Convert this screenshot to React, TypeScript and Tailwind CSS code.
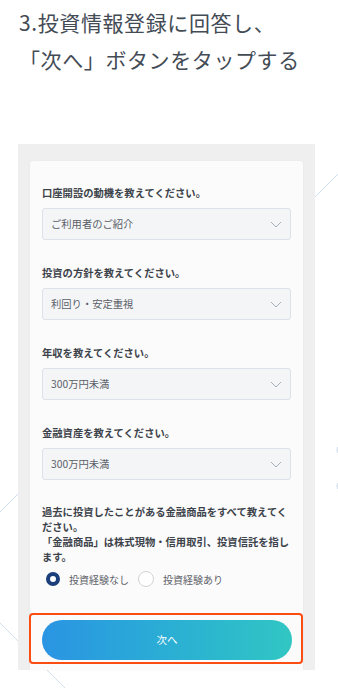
const Chevron = () => (
  <svg width="12" height="7" viewBox="0 0 12 7" fill="none" className="shrink-0">
    <path d="M1 1l5 5 5-5" stroke="#a7afba" strokeWidth="1" />
  </svg>
);

const Field = ({ label, value, first }: { label: string; value: string; first?: boolean }) => (
  <div className={first ? "" : "mt-[26px]"}>
    <p className="text-[10.3px] font-bold leading-[14px] text-[#3d434b]">{label}</p>
    <div className="mt-2 flex h-8 items-center justify-between rounded-[3px] border border-[#dce2ea] bg-[#f4f5f7] pl-2 pr-2 text-[10.3px] text-[#5b6068]">
      <span>{value}</span>
      <Chevron />
    </div>
  </div>
);

export default function App() {
  return (
    <div className="relative h-[688px] w-[338px] overflow-hidden bg-white font-['Noto_Sans_CJK_JP',sans-serif]">
      {/* background decoration */}
      <svg className="absolute inset-0" width="338" height="688" fill="none">
        <line x1="0" y1="512" x2="338" y2="174" stroke="#cfdff1" strokeWidth="1" />
        <line x1="0" y1="623" x2="70" y2="693" stroke="#cfdff1" strokeWidth="1" />
        <circle cx="342" cy="450" r="5" stroke="#c9d6e6" strokeWidth="1" />
        <circle cx="342" cy="486" r="5" stroke="#c9d6e6" strokeWidth="1" />
      </svg>

      <div className="relative">
        <h1 className="pl-[19px] pt-[4px] text-[21px] font-normal leading-[37px] tracking-[0.6px] text-[#434b55]">
          3.投資情報登録に回答し、
          <br />
          「次へ」ボタンをタップする
        </h1>

        <div className="ml-[18px] mt-[66px] h-[526px] w-[297px] bg-[#efefef] px-3 pt-[17px]">
          <div className="h-full rounded-t-[3px] bg-[#fbfbfb] px-3 pt-[25px] shadow-[0_0_3px_rgba(0,0,0,0.04)]">
            <Field first label="口座開設の動機を教えてください。" value="ご利用者のご紹介" />
            <Field label="投資の方針を教えてください。" value="利回り・安定重視" />
            <Field label="年収を教えてください。" value="300万円未満" />
            <Field label="金融資産を教えてください。" value="300万円未満" />

            <p className="mt-6 w-[249px] text-[10.3px] font-bold leading-[15px] text-[#3d434b]">
              過去に投資したことがある金融商品をすべて教えてください。
              <br />
              「金融商品」は株式現物・信用取引、投資信託を指し
              <br />
              ます。
            </p>

            <div className="mt-[7px] flex h-4 items-center text-[10px] text-[#5d6168]">
              <span className="ml-1 h-[14px] w-[14px] rounded-full border-4 border-[#1b3f7a] bg-white" />
              <span className="ml-[9px]">投資経験なし</span>
              <span className="ml-[9px] h-4 w-4 rounded-full border border-[#d3d3d3] bg-white" />
              <span className="ml-[9px]">投資経験あり</span>
            </div>

            <div className="-ml-[13px] mt-[26px] w-[274px] rounded-[4px] border-2 border-[#fb4c12] pb-[2px] pl-[11px] pr-[9px] pt-[5px]">
              <button className="flex h-10 w-full items-center justify-center rounded-full bg-linear-to-r from-[#2b94e3] to-[#31c6c3] text-[10.5px] text-white">
                次へ
              </button>
            </div>
          </div>
        </div>
      </div>
    </div>
  );
}
